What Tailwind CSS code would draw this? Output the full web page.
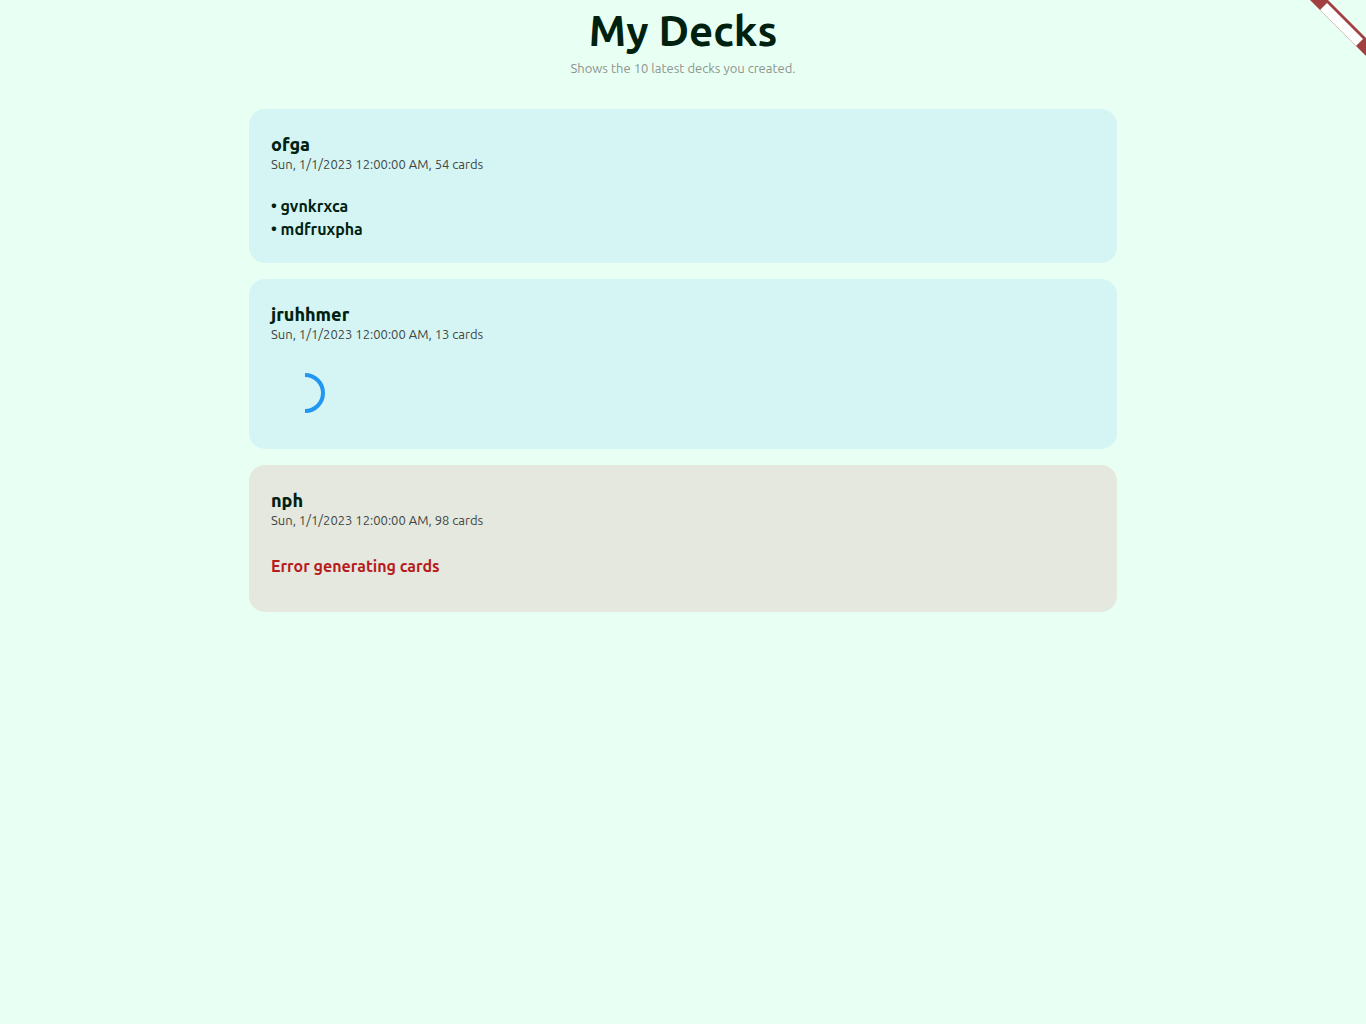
<!DOCTYPE html>
<html lang="en">
<head>
<meta charset="utf-8">
<meta name="viewport" content="width=device-width, initial-scale=1">
<title>My Decks</title>
<script src="https://cdn.jsdelivr.net/npm/@tailwindcss/browser@4"></script>
</head>
<body class="relative min-h-screen overflow-x-hidden bg-[#e8fff3] font-['Ubuntu','Noto_Sans',sans-serif] text-[#002110]">
  <!-- Debug ribbon -->
  <svg class="absolute top-0 right-0 h-14 w-14" viewBox="0 0 56 56" aria-hidden="true">
    <path d="M-1 -1H17L57 39V57Z" fill="#a04040"/>
    <path d="M17 3L53 39L46 46L10 10Z" fill="#fff"/>
    <path d="M10 10L46 46" stroke="#d9bfb9" stroke-width="1"/>
    <path d="M24 10L17 17M31 17L24 24M38 24L31 31M45 31L38 38" stroke="#f3eaea" stroke-width=".5"/>
  </svg>

  <header class="pt-[7px] text-center">
    <h1 class="text-[42px] leading-12 font-semibold">My Decks</h1>
    <p class="pt-1.5 pb-0.5 text-[13px] leading-[14px] text-[#8f948f]">Shows the 10 latest decks you created.</p>
  </header>

  <main class="mx-auto mt-8 flex max-w-[900px] flex-col gap-4 px-4">
    <article class="rounded-2xl bg-[#d4f5f3] px-[22px] pt-[22px] pb-[22px]">
      <h2 class="text-lg leading-[26px] font-extrabold">ofga</h2>
      <p class="text-[13px] leading-[14px] text-[#3f4543]">Sun, 1/1/2023 12:00:00 AM, 54 cards</p>
      <ul class="mt-6 text-base leading-[23px] font-bold">
        <li>• gvnkrxca</li>
        <li>• mdfruxpha</li>
      </ul>
    </article>

    <article class="rounded-2xl bg-[#d4f5f3] px-[22px] pt-[22px] pb-9">
      <h2 class="text-lg leading-[26px] font-extrabold">jruhhmer</h2>
      <p class="text-[13px] leading-[14px] text-[#3f4543]">Sun, 1/1/2023 12:00:00 AM, 13 cards</p>
      <svg class="mt-8 ml-3.5 block h-10 w-10" viewBox="0 0 40 40" role="img" aria-label="Loading cards">
        <path d="M20 2A18 18 0 0 1 20 38" fill="none" stroke="#2196f3" stroke-width="4"/>
      </svg>
    </article>

    <article class="rounded-2xl bg-[#e4e8df] px-[22px] pt-[22px] pb-[34px]">
      <h2 class="text-lg leading-[26px] font-extrabold">nph</h2>
      <p class="text-[13px] leading-[14px] text-[#3f4543]">Sun, 1/1/2023 12:00:00 AM, 98 cards</p>
      <p class="mt-7 text-base leading-[23px] font-bold text-[#b71c1c]">Error generating cards</p>
    </article>
  </main>
</body>
</html>
